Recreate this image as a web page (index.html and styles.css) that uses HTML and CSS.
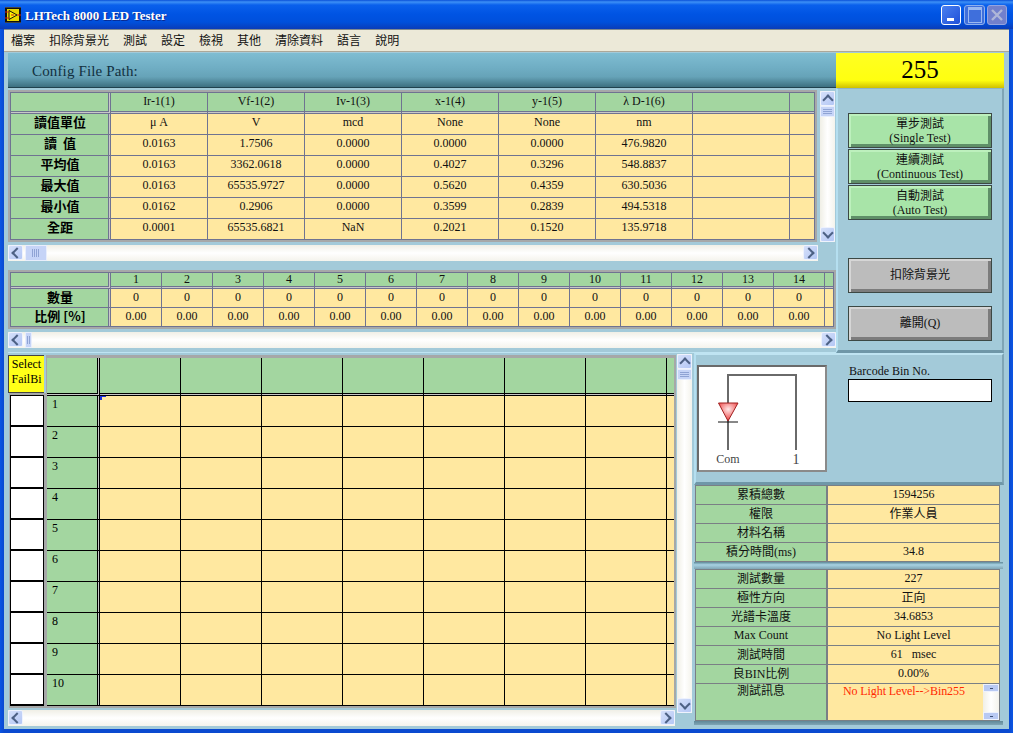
FILE: index.html
```html
<!DOCTYPE html>
<html>
<head>
	<title>LHTech 8000 LED Tester</title>
	<link rel="stylesheet" href="styles.css">
</head>
<body>
<div class="window">
	<div class="titlebar">
		<svg class="appicon" width="16" height="16" viewBox="0 0 16 16">
			<rect width="16" height="16" fill="#111"/>
			<path d="M1 0v16M3 0v16M5 0v16M7 0v16M9 0v16M11 0v16M13 0v16M15 0v16" stroke="#777" stroke-width="1" stroke-dasharray="1 14"/>
			<rect x="2" y="2" width="12" height="12" fill="#e8d800"/>
			<path d="M4 3.5 12 8 4 12.500Z" fill="#fff200" stroke="#111"/>
			<path d="M0 5h4M0 11h4" stroke="#d02020"/>
			<path d="M12 8h4M6 8h3" stroke="#d02020"/>
		</svg>
		<span class="apptitle">LHTech 8000 LED Tester</span>
		<span class="capbtn cap-min"></span>
		<span class="capbtn cap-max"></span>
		<span class="capbtn cap-close">
			<svg width="14" height="14" viewBox="0 0 14 14"><path d="M2 2 12 12M12 2 2 12" stroke="#aeb6d8" stroke-width="2.400"/></svg>
		</span>
	</div>
	<div class="menubar">
		<span>檔案</span><span>扣除背景光</span><span>測試</span><span>設定</span><span>檢視</span><span>其他</span><span>清除資料</span><span>語言</span><span>說明</span>
	</div>

	<div class="client">
		<div class="topbar">
			<div class="pathbar">Config File Path:</div>
			<div class="binbox">255</div>
		</div>

		<div class="upper">
			<div class="upper-left">
				<div class="frame-row">
					<div class="frame">
						<div class="grid t1">
							<div class="hd lb"></div><div class="hd">Ir-1(1)</div><div class="hd">Vf-1(2)</div><div class="hd">Iv-1(3)</div><div class="hd">x-1(4)</div><div class="hd">y-1(5)</div><div class="hd">λ D-1(6)</div><div class="hd"></div><div class="hd"></div>
							<div class="lb">讀值單位</div><div>μ A</div><div>V</div><div>mcd</div><div>None</div><div>None</div><div>nm</div><div></div><div></div>
							<div class="lb">讀&nbsp;&nbsp;值</div><div>0.0163</div><div>1.7506</div><div>0.0000</div><div>0.0000</div><div>0.0000</div><div>476.9820</div><div></div><div></div>
							<div class="lb">平均值</div><div>0.0163</div><div>3362.0618</div><div>0.0000</div><div>0.4027</div><div>0.3296</div><div>548.8837</div><div></div><div></div>
							<div class="lb">最大值</div><div>0.0163</div><div>65535.9727</div><div>0.0000</div><div>0.5620</div><div>0.4359</div><div>630.5036</div><div></div><div></div>
							<div class="lb">最小值</div><div>0.0162</div><div>0.2906</div><div>0.0000</div><div>0.3599</div><div>0.2839</div><div>494.5318</div><div></div><div></div>
							<div class="lb">全距</div><div>0.0001</div><div>65535.6821</div><div>NaN</div><div>0.2021</div><div>0.1520</div><div>135.9718</div><div></div><div></div>
						</div>
					</div>
					<div class="vscroll vs-table">
						<span class="sbtn up"></span><span class="thumb-v"></span><span class="track"></span><span class="sbtn down"></span>
					</div>
				</div>
				<div class="hscroll hs-table">
					<span class="sbtn left"></span><span class="thumb-h wide"></span><span class="track"></span><span class="sbtn right"></span>
				</div>

				<div class="frame frame-bins">
					<div class="grid t2">
						<div class="hd lb"></div><div class="hd">1</div><div class="hd">2</div><div class="hd">3</div><div class="hd">4</div><div class="hd">5</div><div class="hd">6</div><div class="hd">7</div><div class="hd">8</div><div class="hd">9</div><div class="hd">10</div><div class="hd">11</div><div class="hd">12</div><div class="hd">13</div><div class="hd">14</div><div class="hd"></div>
						<div class="lb">數量</div><div>0</div><div>0</div><div>0</div><div>0</div><div>0</div><div>0</div><div>0</div><div>0</div><div>0</div><div>0</div><div>0</div><div>0</div><div>0</div><div>0</div><div></div>
						<div class="lb">比例 [%]</div><div>0.00</div><div>0.00</div><div>0.00</div><div>0.00</div><div>0.00</div><div>0.00</div><div>0.00</div><div>0.00</div><div>0.00</div><div>0.00</div><div>0.00</div><div>0.00</div><div>0.00</div><div>0.00</div><div></div>
					</div>
				</div>
				<div class="hscroll hs-bins">
					<span class="sbtn left"></span><span class="thumb-h"></span><span class="track"></span><span class="sbtn right"></span>
				</div>
			</div>

			<div class="actions">
				<div class="btn green">單步測試<br>(Single Test)</div>
				<div class="btn green">連續測試<br>(Continuous Test)</div>
				<div class="btn green">自動測試<br>(Auto Test)</div>
				<div class="btn grey first-grey">扣除背景光</div>
				<div class="btn grey">離開(Q)</div>
			</div>
		</div>

		<div class="lower">
			<div class="lower-left">
				<div class="stack">
					<div class="sheet">
						<div class="bincol">
							<div class="selectbox">Select<br>FailBi</div>
							<div class="bins">
								<div></div><div></div><div></div><div></div><div></div><div></div><div></div><div></div><div></div><div></div>
							</div>
						</div>
						<div class="mainframe">
							<div class="maingrid">
								<div class="hd lb"></div><div class="hd"></div><div class="hd"></div><div class="hd"></div><div class="hd"></div><div class="hd"></div><div class="hd"></div><div class="hd"></div><div class="hd"></div>
								<div class="lb">1</div><div class="active"></div><div></div><div></div><div></div><div></div><div></div><div></div><div></div>
								<div class="lb">2</div><div></div><div></div><div></div><div></div><div></div><div></div><div></div><div></div>
								<div class="lb">3</div><div></div><div></div><div></div><div></div><div></div><div></div><div></div><div></div>
								<div class="lb">4</div><div></div><div></div><div></div><div></div><div></div><div></div><div></div><div></div>
								<div class="lb">5</div><div></div><div></div><div></div><div></div><div></div><div></div><div></div><div></div>
								<div class="lb">6</div><div></div><div></div><div></div><div></div><div></div><div></div><div></div><div></div>
								<div class="lb">7</div><div></div><div></div><div></div><div></div><div></div><div></div><div></div><div></div>
								<div class="lb">8</div><div></div><div></div><div></div><div></div><div></div><div></div><div></div><div></div>
								<div class="lb">9</div><div></div><div></div><div></div><div></div><div></div><div></div><div></div><div></div>
								<div class="lb">10</div><div></div><div></div><div></div><div></div><div></div><div></div><div></div><div></div>
							</div>
						</div>
					</div>
					<div class="hscroll hs-main">
						<span class="sbtn left"></span><span class="track"></span><span class="sbtn right"></span>
					</div>
				</div>
				<div class="vscroll vs-main">
					<span class="sbtn up"></span><span class="thumb-v"></span><span class="track"></span><span class="sbtn down"></span>
				</div>
			</div>

			<div class="side">
				<div class="scheme">
					<div class="diagram">
						<svg width="126" height="103" viewBox="0 0 126 103">
							<defs>
								<radialGradient id="led" cx="50%" cy="35%" r="60%">
									<stop offset="0" stop-color="#ffe8e8"/>
									<stop offset="1" stop-color="#f04848"/>
								</radialGradient>
							</defs>
							<path d="M29 83V8H97V83" fill="none" stroke="#6a6a6a" stroke-width="2"/>
							<path d="M19.500 36H39L29 54Z" fill="url(#led)" stroke="#a02020"/>
							<path d="M19 55H39" stroke="#111"/>
							<text x="29" y="96" class="dg-text" text-anchor="middle">Com</text>
							<text x="97" y="97" class="dg-text dg-num" text-anchor="middle">1</text>
						</svg>
					</div>
					<div class="barcode">
						<div class="barcode-label">Barcode Bin No.</div>
						<div class="barcode-input"></div>
					</div>
				</div>

				<div class="grid info">
					<div class="key">累積總數</div><div>1594256</div>
					<div class="key">權限</div><div>作業人員</div>
					<div class="key">材料名稱</div><div></div>
					<div class="key">積分時間(ms)</div><div>34.8</div>
				</div>
				<div class="divider"></div>
				<div class="grid info info-status">
					<div class="key">測試數量</div><div>227</div>
					<div class="key">極性方向</div><div>正向</div>
					<div class="key">光譜卡溫度</div><div>34.6853</div>
					<div class="key">Max Count</div><div>No Light Level</div>
					<div class="key">測試時間</div><div>61&nbsp;&nbsp;&nbsp;msec</div>
					<div class="key">良BIN比例</div><div>0.00%</div>
					<div class="key msg-key">測試訊息</div>
					<div class="msg">
						<span class="msg-text">No Light Level--&gt;Bin255</span>
						<span class="msg-scroll"><i></i><b></b><i></i></span>
					</div>
				</div>
				<div class="side-foot"></div>
			</div>
		</div>
	</div>
</div>
</body>
</html>
```

FILE: styles.css
```css
* {
	box-sizing: border-box;
}
html, body {
	margin: 0;
	padding: 0;
}
body {
	width: 1013px;
	height: 733px;
	overflow: hidden;
	font-family: "Liberation Serif", "Noto Sans CJK TC", serif;
	font-size: 12px;
	color: #111;
	background-color: #0a4fdc;
}
.window {
	width: 1013px;
	height: 733px;
	padding: 0 4px 4px;
	display: flex;
	flex-direction: column;
	background: linear-gradient(90deg, #0a55e4, #0a4ad0 4px, #0a4ad0 1009px, #0a55e4);
}

/* title bar */
.titlebar {
	height: 29px;
	margin: 0 -4px;
	padding: 0 6px 0 5px;
	display: flex;
	align-items: center;
	background: linear-gradient(180deg, #0a50d8 0, #3d90f6 2px, #0a60ec 5px, #0054e3 14px, #0050dc 22px, #0a3cb8 29px);
}
.appicon {
	flex: none;
}
.apptitle {
	margin-left: 4px;
	margin-right: auto;
	padding-top: 2px;
	font-weight: bold;
	font-size: 13px;
	color: #fff;
	text-shadow: 1px 1px 0 #0a2a90;
}
.capbtn {
	width: 20px;
	height: 20px;
	margin-left: 2px;
	border-radius: 3px;
	display: flex;
	align-items: center;
	justify-content: center;
	border: 1px solid #8fb0ee;
}
.cap-min {
	margin-right: 1px;
	border-color: #fff;
	background: linear-gradient(135deg, #4a80f0, #1f50d8);
}
.cap-min::after {
	content: "";
	width: 7px;
	height: 3px;
	margin-top: 9px;
	margin-right: 1px;
	background-color: #fff;
}
.cap-max {
	width: 21px;
	background-color: #3f6fdc;
}
.cap-max::after {
	content: "";
	width: 12px;
	height: 12px;
	border: 1px solid #9ab8f0;
	border-top-width: 3px;
}
.cap-close {
	background-color: #7280cc;
	border-color: #95a4e0;
}

/* menu */
.menubar {
	height: 23px;
	padding: 0 0 2px 7px;
	display: flex;
	align-items: center;
	gap: 14px;
	background-color: #ece9d8;
	border-top: 1px solid #808a90;
	border-bottom: 1px solid #aca899;
	font-size: 12px;
}

/* client area */
.client {
	flex: 1;
	padding: 1px 5px 0 4px;
	background-color: #a3cad9;
}
.topbar {
	display: grid;
	grid-template-columns: 828px 168px;
	height: 35px;
}
.pathbar {
	padding: 3px 0 0 24px;
	display: flex;
	align-items: center;
	font-size: 15px;
	letter-spacing: 0.15px;
	color: #123040;
	background: linear-gradient(180deg, #7fbdd2 0, #6fadc3 45%, #66a3b8 70%, #3d6f80 100%);
	border-bottom: 1px solid #20414e;
}
.binbox {
	text-align: center;
	font-size: 25px;
	line-height: 33px;
	color: #000;
	background: linear-gradient(180deg, #ffff22 0, #ffff10 78%, #cfc000 100%);
}
.upper {
	display: grid;
	grid-template-columns: 828px 168px;
	height: 265px;
}
.upper-left {
	padding-top: 2px;
	border-bottom: 1px solid #bfe4f2;
}
.frame-row {
	display: flex;
}

/* tables */
.frame {
	width: 809px;
	border: 2px solid #a6a8a8;
}
.frame-bins {
	width: 828px;
	margin-top: 9px;
}
.grid {
	display: grid;
	gap: 1px;
	background-color: #6f7391;
}
.grid > div {
	display: flex;
	align-items: center;
	justify-content: center;
	background-color: #ffe8a0;
	white-space: nowrap;
}
.t1 > div {
	padding-bottom: 4px;
}
.t2 > div,
.info > div {
	padding-bottom: 2px;
}
.grid > .hd,
.grid > .lb,
.grid > .key {
	background-color: #a3d6a0;
}
.hd {
	border-bottom: 1px solid #c8c8c8;
	box-shadow: inset 0 -1px 0 #6f7391;
}
.lb {
	border-right: 1px solid #c8c8c8;
	box-shadow: inset -1px 0 0 #6f7391;
	font-family: "Noto Sans CJK TC", sans-serif;
	font-weight: bold;
	font-size: 13px;
	color: #000;
}
.grid > .hd {
	padding-bottom: 2px;
}
.t1 > .lb {
	padding-bottom: 6px;
}
.t2 > .lb {
	padding-bottom: 3px;
}
.hd.lb {
	box-shadow: inset -1px 0 0 #6f7391, inset 0 -1px 0 #6f7391;
}
.t1 {
	grid-template-columns: 99px repeat(7, 96px) 24px;
	grid-auto-rows: 20px;
	padding: 1px 1px 1px 1px;
}
.t2 {
	grid-template-columns: 99px repeat(14, 50px) 8px;
	grid-template-rows: 15px 18px 18px;
	padding: 1px 1px 1px 1px;
}

/* scroll bars */
.hscroll, .vscroll {
	display: flex;
}
.vscroll {
	flex-direction: column;
	width: 15px;
	background: linear-gradient(90deg, #f0efe6, #fff 50%, #f4f3ec);
}
.hscroll {
	height: 16px;
	background: linear-gradient(180deg, #f0efe6, #fff 50%, #f4f3ec);
}
.track {
	flex: 1;
}
.vs-table {
	height: 151px;
	margin: 1px 0 0 3px;
}
.hs-table {
	width: 810px;
	margin-top: 3px;
}
.hs-bins {
	width: 828px;
	margin-top: 3px;
}
.sbtn {
	flex: none;
	width: 15px;
	height: 15px;
	display: flex;
	align-items: center;
	justify-content: center;
	background: linear-gradient(135deg, #d5e0fa, #b4c7f5);
	border: 1px solid #eef2fd;
	border-radius: 2px;
}
.sbtn::before {
	content: "";
	width: 6px;
	height: 6px;
	border-top: 2px solid #4d6185;
	border-left: 2px solid #4d6185;
}
.up::before {
	margin-top: 3px;
	transform: rotate(45deg);
}
.down::before {
	margin-bottom: 3px;
	transform: rotate(225deg);
}
.left::before {
	margin-left: 3px;
	transform: rotate(-45deg);
}
.right::before {
	margin-right: 3px;
	transform: rotate(135deg);
}
.thumb-v {
	flex: none;
	height: 11px;
	background-color: #c6d4f7;
	background-image: repeating-linear-gradient(180deg, #8fa3d4 0 1px, #c6d4f7 1px 2px);
	background-size: 9px 5px;
	background-position: center;
	background-repeat: no-repeat;
	border: 1px solid #e8eefc;
}
.thumb-h {
	flex: none;
	width: 7px;
	margin-left: 2px;
	background-color: #c6d4f7;
	background-image: repeating-linear-gradient(90deg, #8fa3d4 0 1px, #c6d4f7 1px 2px);
	background-size: 3px 8px;
	background-position: center;
	background-repeat: no-repeat;
	border: 1px solid #e8eefc;
}
.thumb-h.wide {
	width: 22px;
	background-size: 8px 8px;
}

/* buttons on the right */
.actions {
	padding: 24px 0 0 12px;
	display: flex;
	flex-direction: column;
	gap: 1px;
	border-top: 1px solid #8fb5c5;
	border-left: 2px solid #b5dff0;
	border-right: 2px solid #7fa5b5;
	border-bottom: 3px solid #6f97a8;
}
.btn {
	width: 144px;
	height: 35px;
	margin-left: -2px;
	display: flex;
	align-items: center;
	justify-content: center;
	text-align: center;
	line-height: 14px;
	border: 1px solid #3c4844;
	font-size: 12px;
}
.green {
	background-color: #a8e4a8;
	box-shadow: inset 2px 2px 0 #bdf0bd, inset -3px -3px 0 #5f8f68;
}
.grey {
	margin-top: 12px;
	padding-bottom: 2px;
	background-color: #bcbcbc;
	box-shadow: inset 2px 2px 0 #d6d6d6, inset -3px -3px 0 #7c7c7c;
}
.first-grey {
	margin-top: 37px;
}

/* lower part */
.lower {
	display: grid;
	grid-template-columns: 686px 310px;
	height: 376px;
}
.lower-left {
	display: flex;
	padding-top: 1px;
}
.stack {
	width: 668px;
	padding-top: 1px;
}
.sheet {
	display: flex;
}
.bincol {
	width: 38px;
}
.selectbox {
	width: 36px;
	height: 38px;
	padding-top: 1px;
	text-align: center;
	line-height: 15px;
	overflow: hidden;
	color: #000;
	background-color: #ffff18;
	border-top: 1px solid #444;
	border-left: 1px solid #444;
	border-bottom: 1px solid #444;
}
.bins {
	width: 37px;
	height: 315px;
	margin-left: 1px;
	padding: 1px 1px 2px;
	display: flex;
	flex-direction: column;
	gap: 2px;
	background-color: #000;
	background-clip: padding-box;
	border: 2px solid #a6a8a8;
	border-left-width: 1px;
}
.bins div {
	height: 29px;
	background-color: #fff;
}
.mainframe {
	width: 630px;
	border: 2px solid #a6a8a8;
	border-top-width: 3px;
	border-left-width: 1px;
}
.maingrid {
	display: grid;
	grid-template-columns: 52px repeat(7, 80px) 7px;
	grid-template-rows: 37px repeat(10, 30px);
	gap: 1px;
	height: 348px;
	background-color: #000;
}
.maingrid > div {
	background-color: #ffe8a0;
	position: relative;
}
.maingrid > .hd {
	background-color: #a3d6a0;
	box-shadow: inset 0 -1px 0 #000;
}
.maingrid > .lb {
	padding: 1px 0 0 5px;
	background-color: #a3d6a0;
	box-shadow: inset -1px 0 0 #000;
	font-family: "Liberation Serif", serif;
	font-weight: normal;
	font-size: 12px;
}
.maingrid > .hd.lb {
	box-shadow: inset -1px 0 0 #000, inset 0 -1px 0 #000;
}
.active::before {
	content: "";
	position: absolute;
	left: 0;
	top: 0;
	width: 4px;
	height: 3px;
	border-top: 1px solid #1a30e0;
	border-left: 2px solid #1a30e0;
}
.hs-main {
	width: 667px;
	margin-top: 2px;
}
.vs-main {
	height: 359px;
	margin-left: 1px;
}

/* right side */
.side {
	padding-left: 1px;
}
.scheme {
	height: 132px;
	margin-left: -1px;
	padding: 10px 0 0 1px;
	display: flex;
	background-color: #a3cad9;
	border-top: 2px solid #bfe4f2;
	border-left: 2px solid #b5dff0;
	border-right: 2px solid #7fa5b5;
	border-bottom: 3px solid #6f97a8;
}
.diagram {
	width: 130px;
	height: 107px;
	background-color: #fff;
	border: 2px solid #6a6a6a;
	border-right-color: #8a8a8a;
	border-bottom-color: #8a8a8a;
}
.dg-text {
	font-size: 12px;
	fill: #444;
}
.dg-num {
	font-size: 14px;
}
.barcode {
	margin-left: 21px;
}
.barcode-label {
	height: 14px;
	padding-left: 1px;
	line-height: 12px;
}
.barcode-input {
	width: 144px;
	height: 23px;
	background-color: #fff;
	border: 1px solid #000;
}
.info {
	width: 305px;
	grid-template-columns: 130px 171px;
	grid-auto-rows: 18px;
	column-gap: 2px;
	padding: 1px;
	background-color: #7a7f85;
}
.info-status {
	grid-template-rows: repeat(6, 18px) 36px;
}
.divider {
	width: 309px;
	height: 7px;
	margin-left: -1px;
	background: linear-gradient(180deg, #5f8898, #a8d2e2 40%, #7fa5b5);
}
.grid > .msg-key {
	padding-top: 0;
	align-items: flex-start;
	line-height: 14px;
}
.grid > .msg {
	padding: 0 0 0 15px;
	justify-content: flex-start;
	align-items: stretch;
}
.msg-text {
	flex: 1;
	color: #ff2a00;
	letter-spacing: -0.1px;
	line-height: 14px;
}
.msg-scroll {
	width: 16px;
	display: flex;
	flex-direction: column;
	background: linear-gradient(90deg, #f0efe6, #fff 50%, #f4f3ec);
}
.msg-scroll b {
	flex: 1;
}
.msg-scroll i {
	height: 8px;
	display: flex;
	align-items: center;
	justify-content: center;
	background-color: #b8c9f3;
	border: 1px solid #eef2fd;
}
.msg-scroll i::after {
	content: "";
	width: 3px;
	height: 1px;
	background-color: #3c4f78;
}
.side-foot {
	width: 309px;
	height: 4px;
	margin-left: -1px;
	background: linear-gradient(180deg, #5f8898, #7fa5b5);
}
```
